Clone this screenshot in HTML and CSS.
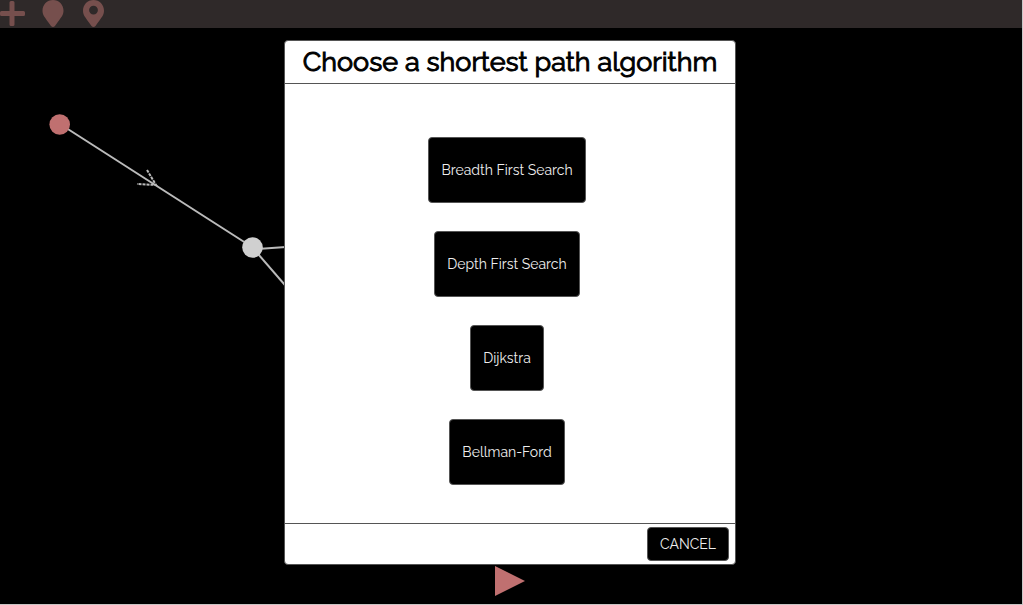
FILE: index.html
```html
<!DOCTYPE html>
<html lang="en">
<head>
<meta charset="utf-8">
<title>Graph editor</title>
<link rel="stylesheet" href="styles.css">
</head>
<body>
<div class="app">
  <header class="toolbar">
    <button class="tool" type="button" aria-label="Add node">
      <svg width="26" height="28" viewBox="0 0 26 28"><path d="M9.500 2.500Q9.500 1 11 1H13Q14.500 1 14.500 2.500V11H23.500Q25 11 25 12.500V14.500Q25 16 23.500 16H14.500V24.500Q14.500 26 13 26H11Q9.500 26 9.500 24.500V16H1.500Q0 16 0 14.500V12.500Q0 11 1.500 11H9.500Z"/></svg>
    </button>
    <button class="tool" type="button" aria-label="Set start">
      <svg width="26" height="28" viewBox="0 0 26 28"><path d="M13 0C7 0 2.500 4.700 2.500 10.500C2.500 15 4.200 16.500 11 26Q13 28 15 26C21.800 16.500 23.500 15 23.500 10.500C23.500 4.700 19 0 13 0Z"/></svg>
    </button>
    <button class="tool" type="button" aria-label="Set destination">
      <svg width="26" height="28" viewBox="0 0 26 28"><path fill-rule="evenodd" d="M13.500 0C7.500 0 3 4.700 3 10.500C3 15 4.700 16.500 11.500 26Q13.500 28 15.500 26C22.300 16.500 24 15 24 10.500C24 4.700 19.500 0 13.500 0ZM13.500 5.700A4.400 4.400 0 1 1 13.500 14.500A4.400 4.400 0 1 1 13.500 5.700Z"/></svg>
    </button>
  </header>
  <main class="stage">
    <svg class="graph" role="img" aria-label="Graph">
      <g class="edges">
        <path d="M60 96L252 219"/>
        <path d="M252 221.500L300 218"/>
        <path d="M252 219L310 286"/>
        <path class="arrow" d="M147 142L156 157L137 156"/>
      </g>
      <circle class="node start" cx="59.700" cy="96.500" r="10.300"/>
      <circle class="node" cx="252.500" cy="219.500" r="10.300"/>
    </svg>
  </main>
  <footer class="controls">
    <button class="play" type="button" aria-label="Run">
      <svg width="30" height="30" viewBox="0 0 30 30"><path d="M0 0L30 15L0 30Z"/></svg>
    </button>
  </footer>
</div>
<div class="overlay">
  <section class="dialog" role="dialog" aria-modal="true" aria-labelledby="dialog-title">
    <h1 class="title" id="dialog-title">Choose a shortest path algorithm</h1>
    <div class="choices">
      <button class="btn choice" type="button">Breadth First Search</button>
      <button class="btn choice" type="button">Depth First Search</button>
      <button class="btn choice" type="button">Dijkstra</button>
      <button class="btn choice" type="button">Bellman-Ford</button>
    </div>
    <div class="actions">
      <button class="btn" type="button">CANCEL</button>
    </div>
  </section>
</div>
</body>
</html>
```
FILE: styles.css
```css
* {
  box-sizing: border-box;
}

body {
  margin: 0;
  background: #000;
  font-family: Raleway, Lato, sans-serif;
}

button {
  border: 0;
  font: inherit;
  cursor: pointer;
}

svg {
  display: block;
}

.app {
  display: flex;
  flex-direction: column;
  height: 100vh;
  border-right: 1px solid #c8c8c8;
  border-bottom: 1px solid #c8c4c4;
}

.toolbar {
  display: flex;
  gap: 14px;
  height: 28px;
  background: #2f2929;
}

.tool {
  padding: 0;
  background: none;
  fill: #764f4d;
}

.stage {
  flex: 1;
  min-height: 0;
}

.graph {
  width: 100%;
  height: 100%;
}

.edges {
  fill: none;
  stroke: #bbb;
  stroke-width: 2;
}

.arrow {
  stroke-dasharray: 3 1;
}

.node {
  fill: #d0d0d0;
}

.start {
  fill: #c07070;
}

.controls {
  display: flex;
  justify-content: center;
  padding: 0 2px 8px 0;
}

.play {
  padding: 0;
  background: none;
  fill: #c07070;
}

.overlay {
  position: fixed;
  inset: 0;
  display: flex;
  align-items: center;
  justify-content: center;
  padding-right: 3px;
}

.dialog {
  width: 44%;
  min-width: 452px;
  border: 1px solid #555;
  border-radius: 4px;
  background: #fff;
}

.title {
  margin: 0;
  padding: 0 15px;
  border-bottom: 1px solid #555;
  font-size: 27px;
  font-weight: 400;
  -webkit-text-stroke: 1px #000;
  line-height: 42px;
  text-align: center;
  white-space: nowrap;
}

.choices {
  display: flex;
  flex-direction: column;
  align-items: center;
  gap: 28px;
  padding: 53px 6px 38px 0;
}

.btn {
  padding: 8px 12px;
  border: 1px solid #555;
  border-radius: 4px;
  background: #000;
  color: #eee;
  font-size: 14px;
  line-height: 16px;
}

.choice {
  padding: 24px 12px;
}

.actions {
  display: flex;
  justify-content: flex-end;
  padding: 3px 6px;
  border-top: 1px solid #555;
}
```
